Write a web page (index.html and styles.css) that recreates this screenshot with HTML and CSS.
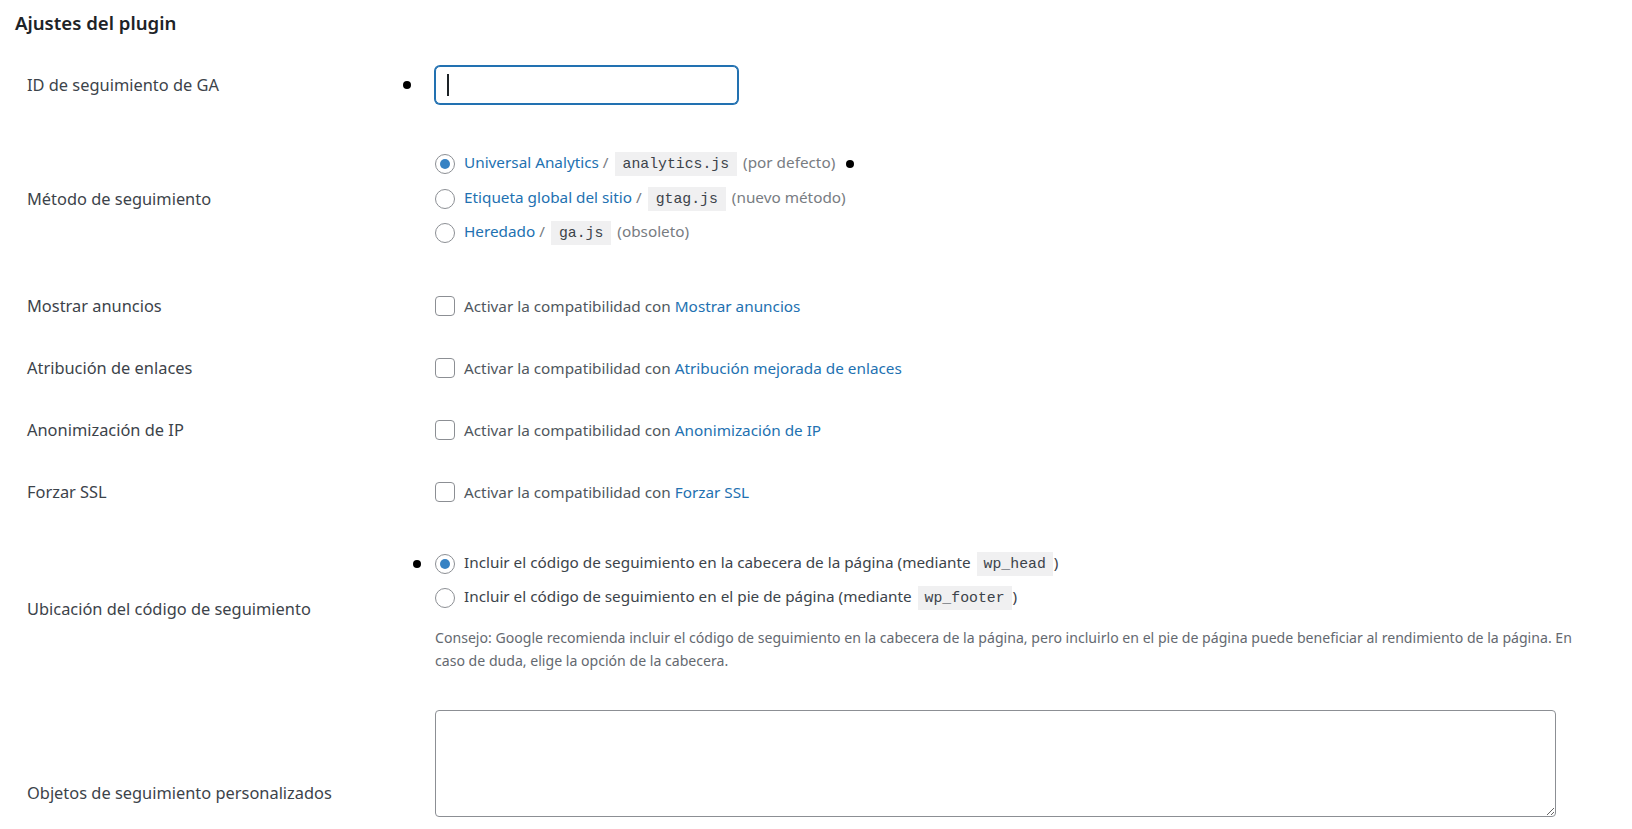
FILE: index.html
```html
<!DOCTYPE html>
<html lang="es">
<head>
    <meta charset="UTF-8">
    <meta name="viewport" content="width=device-width, initial-scale=1.0">
    <title>Ajustes del plugin</title>
    <link rel="stylesheet" href="styles.css">
</head>
<body>
    <div class="page">
        <h2>Ajustes del plugin</h2>

        <div class="form-row row-id">
            <label class="row-label" for="ga-id">ID de seguimiento de GA</label>
            <div class="row-field">
                <span class="dot dot-id"></span>
                <span class="text-input">
                    <input type="text" id="ga-id" value="">
                </span>
            </div>
        </div>

        <div class="form-row row-method">
            <div class="row-label">Método de seguimiento</div>
            <div class="row-field">
                <label class="choice">
                    <input type="radio" name="method" checked>
                    <span><a href="#">Universal Analytics</a> <span class="muted">/</span> <code>analytics.js</code> <span class="muted">(por defecto)</span></span>
                    <span class="dot dot-after"></span>
                </label>
                <label class="choice">
                    <input type="radio" name="method">
                    <span><a href="#">Etiqueta global del sitio</a> <span class="muted">/</span> <code>gtag.js</code> <span class="muted">(nuevo método)</span></span>
                </label>
                <label class="choice">
                    <input type="radio" name="method">
                    <span><a href="#">Heredado</a> <span class="muted">/</span> <code>ga.js</code> <span class="muted">(obsoleto)</span></span>
                </label>
            </div>
        </div>

        <div class="form-row row-check">
            <div class="row-label">Mostrar anuncios</div>
            <div class="row-field">
                <label class="choice check">
                    <input type="checkbox">
                    <span>Activar la compatibilidad con <a href="#">Mostrar anuncios</a></span>
                </label>
            </div>
        </div>

        <div class="form-row row-check">
            <div class="row-label">Atribución de enlaces</div>
            <div class="row-field">
                <label class="choice check">
                    <input type="checkbox">
                    <span>Activar la compatibilidad con <a href="#">Atribución mejorada de enlaces</a></span>
                </label>
            </div>
        </div>

        <div class="form-row row-check">
            <div class="row-label">Anonimización de IP</div>
            <div class="row-field">
                <label class="choice check">
                    <input type="checkbox">
                    <span>Activar la compatibilidad con <a href="#">Anonimización de IP</a></span>
                </label>
            </div>
        </div>

        <div class="form-row row-check">
            <div class="row-label">Forzar SSL</div>
            <div class="row-field">
                <label class="choice check">
                    <input type="checkbox">
                    <span>Activar la compatibilidad con <a href="#">Forzar SSL</a></span>
                </label>
            </div>
        </div>

        <div class="form-row row-location">
            <div class="row-label">Ubicación del código de seguimiento</div>
            <div class="row-field">
                <label class="choice plain">
                    <span class="dot dot-location"></span>
                    <input type="radio" name="location" checked>
                    <span>Incluir el código de seguimiento en la cabecera de la página (mediante <code class="hook">wp_head</code>)</span>
                </label>
                <label class="choice plain">
                    <input type="radio" name="location">
                    <span>Incluir el código de seguimiento en el pie de página (mediante <code class="hook">wp_footer</code>)</span>
                </label>
                <p class="description">Consejo: Google recomienda incluir el código de seguimiento en la cabecera de la página, pero incluirlo en el pie de página puede beneficiar al rendimiento de la página. En caso de duda, elige la opción de la cabecera.</p>
            </div>
        </div>

        <div class="form-row row-objects">
            <label class="row-label" for="ga-objects">Objetos de seguimiento personalizados</label>
            <div class="row-field">
                <textarea id="ga-objects"></textarea>
            </div>
        </div>
    </div>
</body>
</html>
```

FILE: styles.css
```css
body {
    margin: 0;
    font-family: "Noto Sans", "Open Sans", sans-serif;
    font-size: 15.3px;
    color: #2c3338;
    background-color: #fff;
}

a {
    color: #2271b1;
    text-decoration: none;
}

.page {
    padding: 11px 0 0 15px;
}

h2 {
    margin: 0 0 11px;
    font-size: 18.6px;
    font-weight: 600;
    line-height: 24px;
    color: #1d2327;
}

.form-row {
    display: grid;
    grid-template-columns: 408px 1fr;
    align-items: center;
    padding: 21px 32px 21px 12px;
}

.row-label {
    color: #3c434a;
    font-size: 16.4px;
    line-height: 20px;
}

.row-field {
    min-width: 0;
}

.row-id {
    padding-top: 20px;
    padding-bottom: 20px;
}

.row-id .row-field {
    display: flex;
    align-items: center;
}

.row-method {
    padding-top: 23px;
    padding-bottom: 24px;
}

.row-location {
    padding-top: 24px;
    padding-bottom: 17px;
}

.row-objects {
    align-items: start;
}

.row-objects .row-label {
    padding-top: 73px;
}

/* black markers */
.dot {
    display: inline-block;
    width: 8px;
    height: 8px;
    border-radius: 50%;
    background-color: #000;
    flex: none;
}

.dot-id {
    margin-left: -32px;
    margin-right: 24px;
}

.dot-after {
    margin-left: 11px;
}

.dot-location {
    margin-left: -22px;
    margin-right: 14px;
}

/* text input */
.text-input {
    position: relative;
    display: inline-block;
}

.text-input input {
    box-sizing: border-box;
    width: 303px;
    height: 38px;
    padding: 0 10px;
    border: 1px solid #2271b1;
    border-radius: 5px;
    box-shadow: 0 0 0 1px #2271b1;
    outline: none;
    font: inherit;
    caret-color: transparent;
}

.text-input::after {
    content: "";
    position: absolute;
    left: 12px;
    top: 8px;
    width: 2px;
    height: 22px;
    background-color: #1d2327;
}

/* radios and checkboxes */
.choice {
    display: flex;
    align-items: center;
    height: 34.5px;
    color: #646970;
    white-space: nowrap;
}

.choice.check {
    height: 20px;
    color: #50575e;
}

.choice.plain {
    color: #3c434a;
}

.muted {
    color: #787c82;
}

.choice input {
    appearance: none;
    -webkit-appearance: none;
    box-sizing: border-box;
    flex: none;
    width: 20px;
    height: 20px;
    margin: 0 9px 0 0;
    border: 1px solid #8c8f94;
    background-color: #fff;
    position: relative;
}

.choice input[type="radio"] {
    border-radius: 50%;
}

.choice input[type="radio"]:checked::before {
    content: "";
    position: absolute;
    left: 4px;
    top: 4px;
    width: 10px;
    height: 10px;
    border-radius: 50%;
    background-color: #3582c4;
}

.choice input[type="checkbox"] {
    border-radius: 4px;
}

code {
    display: inline-block;
    margin: 0 2px;
    padding: 0 8px;
    line-height: 24px;
    font-family: "Liberation Mono", "DejaVu Sans Mono", monospace;
    font-size: 14.8px;
    color: #3c434a;
    background-color: #f0f0f1;
}

code.hook {
    margin: 0 1px 0 2px;
    padding: 0 7px;
}

.description {
    max-width: 1150px;
    margin: 10px 0 0;
    font-size: 14.1px;
    line-height: 23px;
    color: #646970;
}

textarea {
    display: block;
    box-sizing: border-box;
    width: calc(100% - 44px);
    height: 107px;
    margin: 0;
    border: 1px solid #8c8f94;
    border-radius: 4px;
    font: inherit;
}
```
